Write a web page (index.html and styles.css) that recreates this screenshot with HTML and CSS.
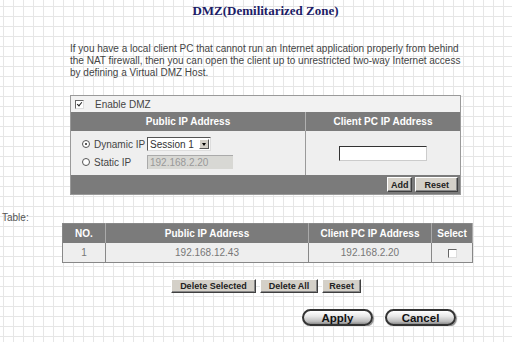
FILE: index.html
```html
<!DOCTYPE html>
<html lang="en">
<head>
    <meta charset="utf-8" />
    <title>DMZ</title>
    <link rel="stylesheet" href="styles.css">
</head>
<body>

    <h1 class="title">DMZ(Demilitarized Zone)</h1>

    <p class="intro">If you have a local client PC that cannot run an Internet application properly from behind the NAT firewall, then you can open the client up to unrestricted two-way Internet access by defining a Virtual DMZ Host.</p>

    <table class="dmz">
        <tr class="enableRow">
            <td colspan="2"><span class="check checked"></span><span class="lbl">Enable DMZ</span></td>
        </tr>
        <tr class="head">
            <th class="pubCol">Public IP Address</th>
            <th>Client PC IP Address</th>
        </tr>
        <tr class="bodyRow">
            <td class="pubCell">
                <div class="opt">
                    <span class="radio on"></span><span class="optName">Dynamic IP</span>
                    <span class="select">Session 1<span class="arrow"></span></span>
                </div>
                <div class="opt">
                    <span class="radio"></span><span class="optName">Static IP</span>
                    <span class="field disabled">192.168.2.20</span>
                </div>
            </td>
            <td class="clientCell"><span class="field client"></span></td>
        </tr>
        <tr class="foot">
            <td colspan="2"><button class="btn small">Add</button><button class="btn">Reset</button></td>
        </tr>
    </table>

    <div class="tableLabel">Table:</div>

    <table class="list">
        <tr class="head">
            <th class="colNo">NO.</th>
            <th class="colPub">Public IP Address</th>
            <th class="colClient">Client PC IP Address</th>
            <th class="colSel">Select</th>
        </tr>
        <tr class="row">
            <td>1</td>
            <td>192.168.12.43</td>
            <td>192.168.2.20</td>
            <td><span class="check"></span></td>
        </tr>
    </table>

    <section class="listButtons">
        <button class="btn">Delete Selected</button>
        <button class="btn">Delete All</button>
        <button class="btn narrow">Reset</button>
    </section>

    <section class="mainButtons">
        <button class="pill">Apply</button>
        <button class="pill">Cancel</button>
    </section>

</body>
</html>
```

FILE: styles.css
```css
body{
    margin: 0;
    font-family: "Liberation Sans", Arial, sans-serif;
    background-color: #fff;
    background-image: linear-gradient(#e6e6e6 1px, transparent 1px),
                      linear-gradient(90deg, #e6e6e6 1px, transparent 1px);
    background-size: 10px 10px;
    background-position: 3px 6px;
}

.title{
    margin: 3px 0 0 70px;
    width: 391px;
    text-align: center;
    font-family: "Liberation Serif", "Times New Roman", serif;
    font-size: 13px;
    line-height: 16px;
    color: #1c1c66;
}

.intro{
    margin: 24px 0 0 70px;
    width: 391px;
    font-size: 10px;
    line-height: 12px;
    color: #444;
}

/* DMZ form box */
.dmz{
    margin: 16px 0 0 70px;
    width: 391px;
    border-collapse: collapse;
    border: 1px solid #9a9a9a;
    font-size: 10px;
    color: #444;
}

.dmz td, .dmz th{
    padding: 0;
}

.enableRow td{
    height: 16px;
    background: #f2f2f2;
    padding-left: 4px;
}

.lbl{
    margin-left: 11px;
    vertical-align: middle;
}

.head th{
    background: #7b7b7b;
    color: #fff;
    font-size: 10px;
    font-weight: bold;
    height: 19px;
    padding: 0;
    text-align: center;
    white-space: nowrap;
}

.dmz .pubCol{
    width: 234px;
    border-right: 1px solid #b0b0b0;
}

.bodyRow td{
    background: #efefef;
    height: 44px;
}

.pubCell{
    padding-left: 11px !important;
    border-right: 1px solid #9a9a9a;
}

.opt{
    display: flex;
    align-items: center;
    height: 18px;
}

.optName{
    width: 53px;
    margin-left: 4px;
}

.radio{
    display: inline-block;
    width: 6px;
    height: 6px;
    border: 1px solid #555;
    border-radius: 50%;
    background: #fff;
    position: relative;
}

.radio.on::after{
    content: "";
    position: absolute;
    left: 2px;
    top: 2px;
    width: 2px;
    height: 2px;
    background: #222;
    border-radius: 50%;
}

.select{
    display: inline-flex;
    align-items: center;
    justify-content: space-between;
    width: 60px;
    height: 12px;
    padding-left: 2px;
    background: #fff;
    border: 1px solid;
    border-color: #555 #ddd #ddd #555;
    color: #333;
    font-size: 10px;
}

.arrow{
    width: 10px;
    height: 10px;
    margin-right: 1px;
    background: #d4d0c8;
    border: 1px solid;
    border-color: #fff #555 #555 #fff;
    box-sizing: border-box;
    position: relative;
}

.arrow::after{
    content: "";
    position: absolute;
    left: 2px;
    top: 3px;
    border-left: 2px solid transparent;
    border-right: 2px solid transparent;
    border-top: 3px solid #000;
}

.field{
    display: inline-block;
    height: 13px;
    line-height: 13px;
    padding-left: 2px;
    font-size: 10px;
    box-sizing: content-box;
}

.field.disabled{
    width: 83px;
    background: #d8d8d4;
    color: #999;
    border-top: 1px solid #aaa;
    border-left: 1px solid #aaa;
}

.clientCell{
    text-align: center;
}

.field.client{
    width: 84px;
    background: #fff;
    border: 1px solid;
    border-color: #333 #ccc #ccc #333;
    vertical-align: middle;
}

.foot td{
    background: #7b7b7b;
    height: 19px;
    text-align: right;
    padding-right: 2px;
}

/* classic grey buttons */
.btn{
    height: 15px;
    padding: 0 8px;
    margin-left: 3px;
    background: #d4d0c8;
    border: 1px solid;
    border-color: #fff #404040 #404040 #fff;
    box-shadow: inset -1px -1px 0 #888;
    font-family: "Liberation Sans", Arial, sans-serif;
    font-size: 9px;
    font-weight: bold;
    color: #222;
    vertical-align: middle;
}

.btn.small{
    padding: 0 3px;
}

.btn.narrow{
    padding: 0 6px;
}

.check{
    display: inline-block;
    width: 7px;
    height: 7px;
    background: #fff;
    border: 1px solid;
    border-color: #666 #ddd #ddd #666;
    vertical-align: middle;
    position: relative;
}

.check.checked::after{
    content: "";
    position: absolute;
    left: 2px;
    top: 0;
    width: 2px;
    height: 4px;
    border: solid #222;
    border-width: 0 1px 1px 0;
    transform: rotate(40deg);
}

.tableLabel{
    margin: 17px 0 0 2px;
    font-size: 10px;
    color: #555;
}

/* list table */
.list{
    margin: 0 0 0 62px;
    width: 406px;
    table-layout: fixed;
    border-collapse: collapse;
    border: 1px solid #888;
    font-size: 10px;
}

.list th{
    border-right: 1px solid #aaa;
}

.colNo{ width: 42px; }
.colPub{ width: 202px; }
.colClient{ width: 122px; }
.colSel{ width: 40px; }

.row td{
    background: #eee;
    color: #777;
    height: 19px;
    text-align: center;
    padding: 0;
    border-right: 1px solid #888;
}

.listButtons{
    display: flex;
    justify-content: center;
    gap: 4px;
    margin: 16px 0 0 20px;
}

.listButtons .btn{
    margin: 0;
    height: 14px;
}

.mainButtons{
    display: flex;
    justify-content: flex-end;
    gap: 12px;
    margin: 16px 56px 0 0;
}

.pill{
    width: 71px;
    height: 17px;
    border: 2px solid #333;
    border-radius: 9px;
    background: linear-gradient(#fff 0%, #e8e8e8 40%, #bdbdbd 80%, #8c8c8c 100%);
    box-shadow: 1px 1px 1px #888;
    font-family: "Liberation Sans", Arial, sans-serif;
    font-size: 11.5px;
    font-weight: bold;
    color: #111;
    padding: 0;
}
```
